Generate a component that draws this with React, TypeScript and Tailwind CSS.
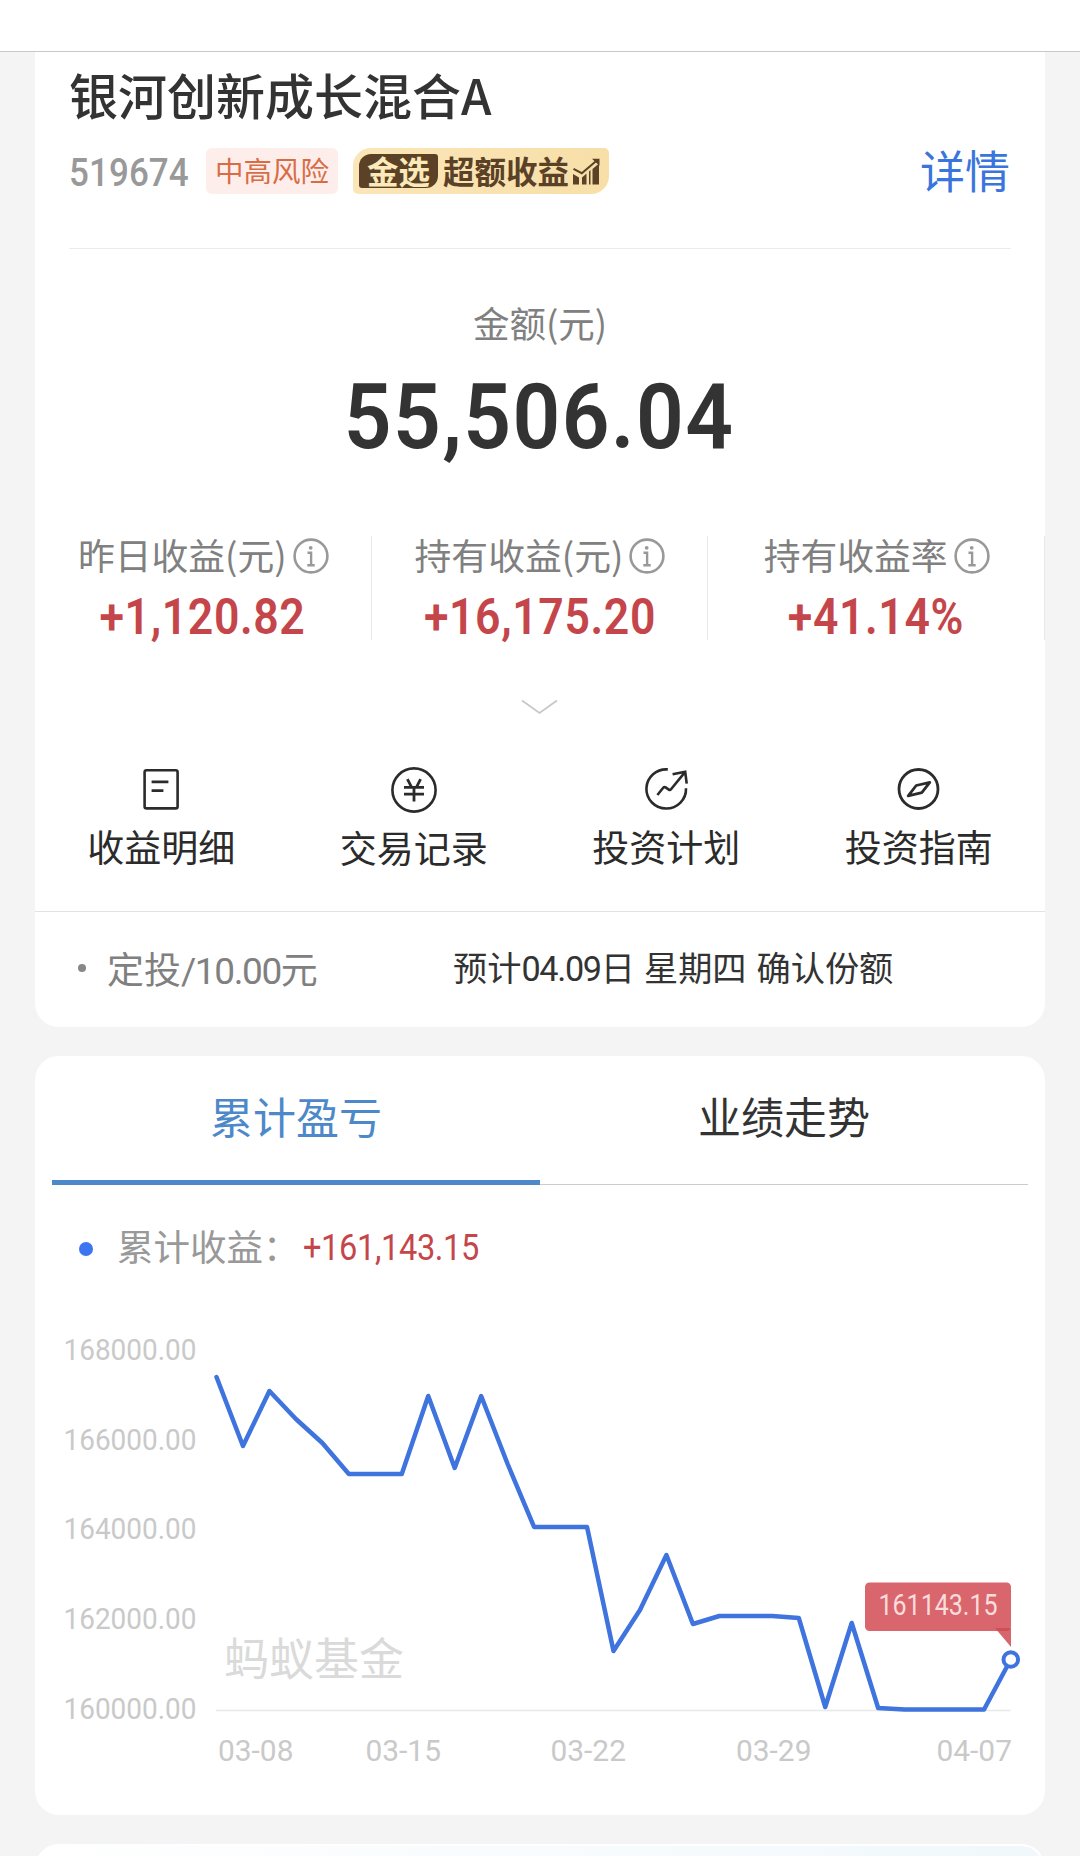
import React, { ReactNode } from "react";

// Chart data: one value per day, y is the pixel offset inside the plot
const POINTS = [
    1377, 1446, 1391, 1419, 1443, 1474, 1474, 1474, 1396, 1468, 1396,
    1464, 1527, 1527, 1527, 1651, 1610, 1555, 1624, 1616, 1616, 1616,
    1618, 1707, 1623, 1708, 1709.5, 1709.5, 1709.5, 1709.5, 1660,
];

const Y_LABELS = ["168000.00", "166000.00", "164000.00", "162000.00", "160000.00"];

const X_LABELS = [
    { text: "03-08", x: 218 },
    { text: "03-15", x: 365.5 },
    { text: "03-22", x: 550.5 },
    { text: "03-29", x: 736 },
    { text: "04-07", x: 936.5 },
];

function InfoIcon() {
    return (
        <svg className="size-[36px] shrink-0" viewBox="0 0 36 36" fill="none" stroke="#999" strokeWidth="2.6">
            <circle cx="18" cy="18" r="16.4" />
            <circle cx="17.7" cy="9.8" r="1.9" fill="#999" stroke="none" />
            <path d="M14.5 14.8h3.6v12.2M14.3 27.3h7.4" strokeWidth="2.4" />
        </svg>
    );
}

function BillIcon() {
    return (
        <svg className="size-12" viewBox="0 0 48 48" fill="none" stroke="#2b2b2b" strokeWidth="2.6">
            <rect x="7.6" y="5.2" width="33" height="38.2" rx="2" />
            <path d="M14.6 16.8h16.8M14.6 25.6h11.8" strokeWidth="2.8" />
        </svg>
    );
}

function YenIcon() {
    return (
        <svg className="size-12" viewBox="0 0 48 48" fill="none" stroke="#2b2b2b" strokeWidth="2.6">
            <circle cx="24" cy="24" r="21.6" />
            <path d="M17.4 13.2l4 7.6M30.6 13.2l-4 7.6M14 21.4h20M14 28.2h20M24 21.4v14" strokeWidth="2.8" />
        </svg>
    );
}

function TrendIcon() {
    return (
        <svg className="size-12" viewBox="0 0 48 48" fill="none" stroke="#2b2b2b" strokeWidth="2.6">
            <path d="M25.8 4.4A19.8 19.6 0 1 0 44 23.2" />
            <path d="M15.4 30l5.8-7.2c.8-.9 1.5-1 2.4-.4l3.2 2.2c.9.6 1.5.5 2.2-.4L42.8 7.4M30.6 9.2L43.2 6.7l1.5 12" />
        </svg>
    );
}

function CompassIcon() {
    return (
        <svg className="size-12" viewBox="0 0 48 48" fill="none" stroke="#2b2b2b" strokeWidth="2.8">
            <circle cx="23.5" cy="24" r="19.5" />
            <path d="M34.8 17.3l-13.6 3.2-8 10.3 13.6-3.2z" strokeLinejoin="round" />
        </svg>
    );
}

function GrowthIcon() {
    return (
        <svg className="ml-[4px] h-[27px] w-[27px]" viewBox="0 0 27 27" fill="#5b4125">
            <path d="M0 16l6 3.500v7H0zM9 19.500l4.500-4v11H9zM16 13.500l1.500-1.500v14.500H16zM19.500 11L26 5.500v21h-6.500z" />
            <path d="M.5 10.800l8.300 4.400L23.500 2.800" fill="none" stroke="#5b4125" strokeWidth="2" />
            <path d="M19 .8h7.500v7z" />
        </svg>
    );
}

function Stat({ label, value }: { label: string, value: string }) {
    return (
        <div className="flex h-[104px] w-1/3 flex-col items-center border-r border-[#e8e8e8]">
            <div className="flex h-[40px] items-center gap-[6px] pl-[1px] text-[#808080]">
                <span className="pb-[3px] text-[36.8px] leading-[36px]">{label}</span>
                <InfoIcon />
            </div>
            <span className="mt-[14px] scale-x-90 font-[Roboto] text-[49.5px] leading-[56px] font-semibold tracking-[0.7px] text-[#c4464b]">{value}</span>
        </div>
    );
}

function Action({ label, icon, className = "" }: { label: string, icon: ReactNode, className?: string }) {
    return (
        <div className={`flex w-1/4 flex-col items-center text-[#2b2b2b] ${className}`}>
            {icon}
            <span className="mt-[11px] text-[37px] leading-[44px]">{label}</span>
        </div>
    );
}

function Chart() {
    const step = (1010.5 - 216.5) / (POINTS.length - 1);
    const line = POINTS.map((y, i) => `${216.5 + i * step},${y}`).join(" ");

    return (
        <svg className="block h-[480px] w-[1010px] font-[Roboto]" viewBox="35 1300 1010 480" fontSize="29.5">
            {Y_LABELS.map((text, i) => (
                <text key={text} x="63.5" y={1360 + i * 89.7} fill="#c9c9c9" textLength="133" lengthAdjust="spacingAndGlyphs">{text}</text>
            ))}
            {X_LABELS.map(({ text, x }) => (
                <text key={text} x={x} y="1760.5" fill="#c9c9c9" textLength="75.5" lengthAdjust="spacingAndGlyphs">{text}</text>
            ))}
            <text x="224" y="1676" fill="#dadada" fontSize="45" fontFamily="'Noto Sans CJK SC', sans-serif">蚂蚁基金</text>
            <path d="M216 1710.5H1010.5" stroke="#e8e8e8" strokeWidth="1.5" />
            <polyline points={line} fill="none" stroke="#3f73dd" strokeWidth="4.5" strokeLinejoin="round" strokeLinecap="round" />
            <circle cx="1010.8" cy="1659.5" r="7.3" fill="#fff" stroke="#3f73dd" strokeWidth="4" />
            <rect x="865" y="1582.5" width="146" height="48.5" rx="4.5" fill="#d9666d" />
            <path d="M995 1628h16v19z" fill="#d04a53" fillOpacity=".85" />
            <text x="878.5" y="1615" fill="#fbdcdd" textLength="119" lengthAdjust="spacingAndGlyphs">161143.15</text>
        </svg>
    );
}

export default function App() {
    return (
        <div className="flex h-[1856px] w-[1080px] flex-col overflow-hidden bg-[#f4f4f4] font-['Noto_Sans_CJK_SC',sans-serif]">
            <header className="h-[52px] shrink-0 border-b border-[#c6caca] bg-white" />

            {/* Holding summary */}
            <section className="mx-[35px] h-[975px] shrink-0 rounded-b-[24px] bg-white">
                <div className="mx-[34px] h-[197px] border-b border-[#ececec]">
                    <h1 className="pt-[12px] text-[49px] leading-[60px] font-medium text-[#333]">银河创新成长混合A</h1>
                    <div className="mt-[23px] flex h-[48px] items-center">
                        <span className="w-[137px] origin-left scale-x-92 pt-[5px] font-[Roboto] text-[38px] font-medium tracking-[0.1px] text-[#999]">519674</span>
                        <span className="flex h-[46px] w-[132px] items-center justify-center rounded-md bg-[#fdeeec] pb-[2px] text-[28.5px] text-[#d86d45]">中高风险</span>
                        <span className="ml-[15px] flex h-[46px] w-[256px] items-center rounded-[5px] rounded-tl-[18px] rounded-br-[18px] bg-linear-to-r from-[#fbe6b8] to-[#f8dfa8] pl-[6px] text-[31.5px] leading-[34px] font-bold text-[#5b4125]">
                            <span className="flex h-[34px] w-[79px] items-center justify-center rounded-[3px] rounded-tl-[12px] rounded-br-[12px] bg-[#5b4125] pb-[3px] text-[#fbe9b9]">金选</span>
                            <span className="ml-[5px] pb-[3px]">超额收益</span>
                            <GrowthIcon />
                        </span>
                        <a className="mr-[1px] ml-auto pb-[3px] text-[45px] leading-[48px] text-[#3a74dd]">详情</a>
                    </div>
                </div>

                <div className="flex flex-col items-center pt-[50px]">
                    <span className="text-[36.5px] leading-[48px] text-[#808080]">金额(元)</span>
                    <span className="mt-[15px] scale-x-93 pr-[1px] font-[Roboto] text-[90px] leading-[112px] font-semibold tracking-[1.5px] text-[#333]">55,506.04</span>
                </div>

                <div className="mt-[62px] flex">
                    <Stat label="昨日收益(元)" value="+1,120.82" />
                    <Stat label="持有收益(元)" value="+16,175.20" />
                    <Stat label="持有收益率" value="+41.14%" />
                </div>

                <svg className="mx-auto mt-[58px] block h-[18px] w-[40px]" viewBox="0 0 40 18" fill="none" stroke="#c8c8c8" strokeWidth="1.8">
                    <path d="M2 2.5L19.5 15 37 2.5" />
                </svg>

                <div className="mt-[49px] flex h-[147px] border-b border-[#e2e2e2]">
                    <Action label="收益明细" icon={<BillIcon />} />
                    <Action label="交易记录" icon={<YenIcon />} className="pt-[1px]" />
                    <Action label="投资计划" icon={<TrendIcon />} />
                    <Action label="投资指南" icon={<CompassIcon />} />
                </div>

                <div className="flex h-[115px] items-center pl-[43px]">
                    <span className="mt-[-4px] size-[8px] rounded-full bg-[#888]" />
                    <span className="ml-[21px] w-[346px] pt-[4px] font-[Roboto,'Noto_Sans_CJK_SC',sans-serif] text-[37px] text-[#808080]">
                        定投<span className="tracking-[-1.4px]">/10.00</span>元
                    </span>
                    <span className="pt-[1px] font-[Roboto,'Noto_Sans_CJK_SC',sans-serif] text-[34.2px] text-[#333]">
                        预计<span className="tracking-[-1.3px]">04.09</span>日<span className="ml-[9px]">星期四</span><span className="ml-[10px]">确认份额</span>
                    </span>
                </div>
            </section>

            {/* Accumulated profit */}
            <section className="mx-[35px] mt-[29px] h-[759px] shrink-0 rounded-[24px] bg-white">
                <div className="mx-[17px] flex h-[129px] text-[43px] leading-[60px]">
                    <div className="w-1/2 border-b-[5px] border-[#4d88c8] pt-[29px] text-center text-[#4d88c8]">累计盈亏</div>
                    <div className="w-1/2 border-b border-[#ccc] pt-[29px] text-center text-[#333]">业绩走势</div>
                </div>
                <div className="flex h-[115px] items-start pt-[35px] pl-[44px]">
                    <span className="mt-[22px] size-[14px] rounded-full bg-[#3b75f0]" />
                    <span className="ml-[24px] text-[36.5px] leading-[52px] text-[#999]">累计收益：</span>
                    <span className="ml-[3px] origin-left scale-x-88 pt-[1px] font-[Roboto] text-[37px] leading-[54px] tracking-[-0.4px] text-[#c4464b]">+161,143.15</span>
                </div>
                <Chart />
            </section>

            <section className="mx-[35px] mt-[29px] h-[60px] shrink-0 rounded-t-[24px] border-2 border-white bg-linear-to-r from-white to-[#f0f8fc]" />
        </div>
    );
}
